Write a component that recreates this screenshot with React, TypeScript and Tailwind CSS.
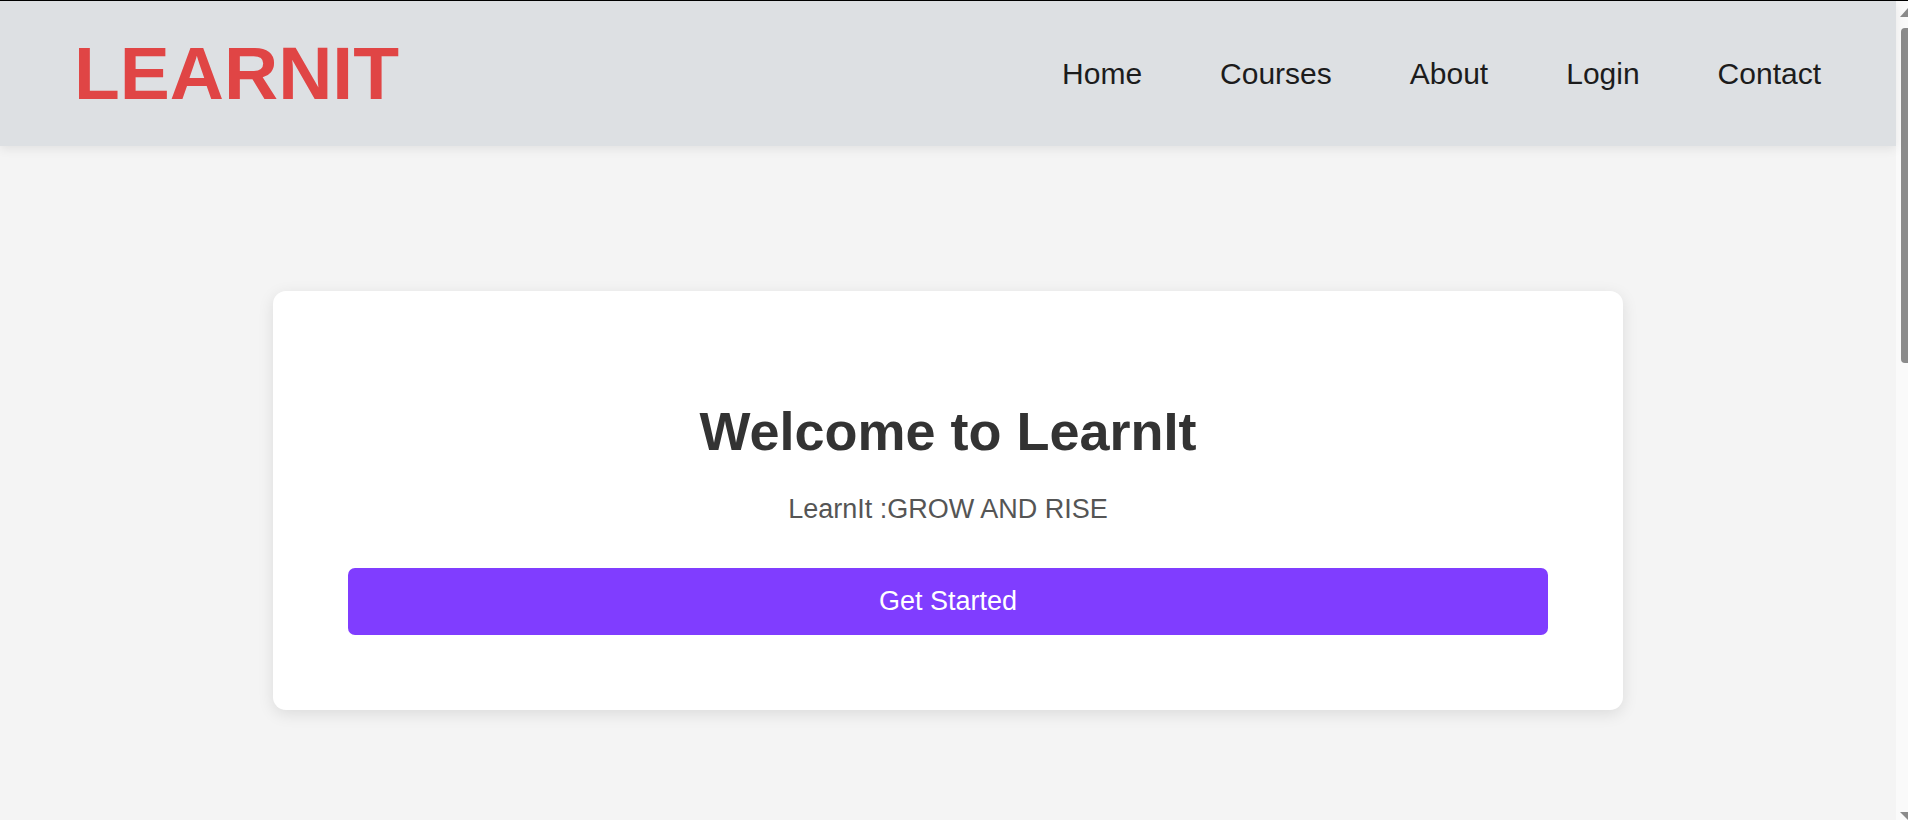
import React from 'react';

const navLinks = ['Home', 'Courses', 'About', 'Login', 'Contact'];

function Header() {
  return (
    <header className="h-[146px] border-t border-black bg-[#dde0e3] shadow-[0_3px_10px_rgba(0,0,0,0.08)] flex items-center justify-between pl-[74px] pr-[75px] relative z-10">
      <div className="text-[75px] font-bold text-[#e04545] leading-none">LEARNIT</div>
      <nav className="flex items-center gap-[78px]">
        {navLinks.map((link) => (
          <a key={link} href="#" className="text-[30px] text-[#1c1c1c] leading-none">
            {link}
          </a>
        ))}
      </nav>
    </header>
  );
}

function Hero() {
  return (
    <section className="pt-[145px] flex justify-center">
      <div className="w-[1350px] bg-white rounded-[13px] shadow-[0_4px_16px_rgba(0,0,0,0.1)] px-[75px] pt-[109px] pb-[75px] text-center">
        <h1 className="text-[54px] leading-[63px] font-bold text-[#333333]">Welcome to LearnIt</h1>
        <p className="mt-[31px] text-[27px] leading-[31px] text-[#555555]">LearnIt :GROW AND RISE</p>
        <button className="mt-[43px] w-full h-[67px] rounded-[7px] bg-[#803dff] text-white text-[27px]">
          Get Started
        </button>
      </div>
    </section>
  );
}

// page scrollbar as it shows in the screenshot
function ScrollTrack() {
  return (
    <aside className="w-[12px] shrink-0 bg-[#fafafa] border-t border-black flex flex-col items-end">
      <svg width="8" height="9" viewBox="0 0 8 9" className="mt-[7px]">
        <polygon points="0,9 8,0 8,9" fill="#8a8a8a" />
      </svg>
      <div className="mt-[11px] w-[7px] h-[335px] bg-[#8b8b8b] rounded-l-[4px]" />
      <div className="flex-1" />
      <svg width="8" height="8" viewBox="0 0 8 8">
        <polygon points="0,0 8,0 8,8" fill="#8a8a8a" />
      </svg>
    </aside>
  );
}

export default function App() {
  return (
    <div className="h-screen flex overflow-hidden bg-[#f4f4f4] font-['Liberation_Sans',Arial,sans-serif]">
      <main className="flex-1 min-w-0">
        <Header />
        <Hero />
      </main>
      <ScrollTrack />
    </div>
  );
}
